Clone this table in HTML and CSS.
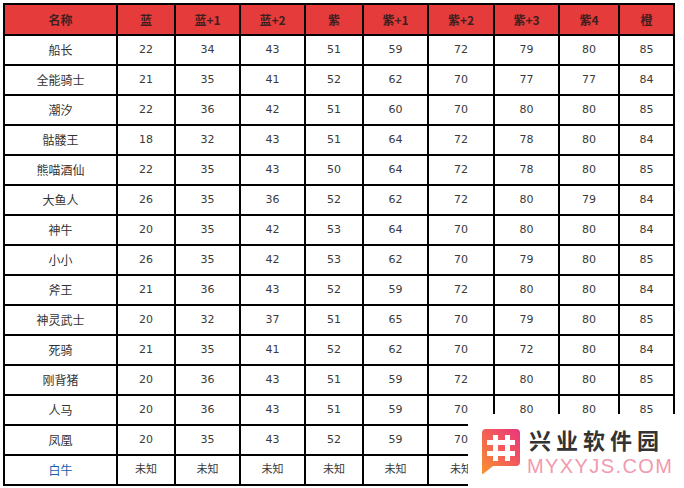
FILE: index.html
```html
<!DOCTYPE html>
<html lang="zh">
<head>
<meta charset="utf-8">
<title>英雄属性表</title>
<link rel="stylesheet" href="styles.css">
</head>
<body>
<div class="page">
<table class="grid">
  <thead>
    <tr>
      <th class="c-name">名称</th><th class="c1">蓝</th><th class="c2">蓝+1</th><th class="c3">蓝+2</th><th class="c4">紫</th><th class="c5">紫+1</th><th class="c6">紫+2</th><th class="c7">紫+3</th><th class="c8">紫4</th><th class="c9">橙</th>
    </tr>
  </thead>
  <tbody>
    <tr><td class="name">船长</td><td>22</td><td>34</td><td>43</td><td>51</td><td>59</td><td>72</td><td>79</td><td>80</td><td>85</td></tr>
    <tr><td class="name">全能骑士</td><td>21</td><td>35</td><td>41</td><td>52</td><td>62</td><td>70</td><td>77</td><td>77</td><td>84</td></tr>
    <tr><td class="name">潮汐</td><td>22</td><td>36</td><td>42</td><td>51</td><td>60</td><td>70</td><td>80</td><td>80</td><td>85</td></tr>
    <tr><td class="name">骷髅王</td><td>18</td><td>32</td><td>43</td><td>51</td><td>64</td><td>72</td><td>78</td><td>80</td><td>84</td></tr>
    <tr><td class="name">熊喵酒仙</td><td>22</td><td>35</td><td>43</td><td>50</td><td>64</td><td>72</td><td>78</td><td>80</td><td>85</td></tr>
    <tr><td class="name">大鱼人</td><td>26</td><td>35</td><td>36</td><td>52</td><td>62</td><td>72</td><td>80</td><td>79</td><td>84</td></tr>
    <tr><td class="name">神牛</td><td>20</td><td>35</td><td>42</td><td>53</td><td>64</td><td>70</td><td>80</td><td>80</td><td>84</td></tr>
    <tr><td class="name">小小</td><td>26</td><td>35</td><td>42</td><td>53</td><td>62</td><td>70</td><td>79</td><td>80</td><td>85</td></tr>
    <tr><td class="name">斧王</td><td>21</td><td>36</td><td>43</td><td>52</td><td>59</td><td>72</td><td>80</td><td>80</td><td>84</td></tr>
    <tr><td class="name">神灵武士</td><td>20</td><td>32</td><td>37</td><td>51</td><td>65</td><td>70</td><td>79</td><td>80</td><td>85</td></tr>
    <tr><td class="name">死骑</td><td>21</td><td>35</td><td>41</td><td>52</td><td>62</td><td>70</td><td>72</td><td>80</td><td>84</td></tr>
    <tr><td class="name">刚背猪</td><td>20</td><td>36</td><td>43</td><td>51</td><td>59</td><td>72</td><td>80</td><td>80</td><td>85</td></tr>
    <tr><td class="name">人马</td><td>20</td><td>36</td><td>43</td><td>51</td><td>59</td><td>70</td><td>80</td><td>80</td><td>85</td></tr>
    <tr><td class="name">凤凰</td><td>20</td><td>35</td><td>43</td><td>52</td><td>59</td><td>70</td><td></td><td></td><td></td></tr>
    <tr><td class="name link">白牛</td><td>未知</td><td>未知</td><td>未知</td><td>未知</td><td>未知</td><td>未知</td><td></td><td></td><td></td></tr>
  </tbody>
</table>

<div class="watermark">
  <svg class="wm-logo" width="40" height="46" viewBox="0 0 40 46">
    <defs>
      <linearGradient id="wmg" x1="0" y1="1" x2="1" y2="0">
        <stop offset="0" stop-color="#f7922e"/>
        <stop offset="0.55" stop-color="#f25a5a"/>
        <stop offset="1" stop-color="#e8357e"/>
      </linearGradient>
    </defs>
    <path d="M4 0 H34 Q38 0 38 4 V33 Q38 37 34 37 H11 L1 45 Q0 45.5 0 44 V4 Q0 0 4 0 Z" fill="url(#wmg)"/>
    <rect x="11" y="6" width="5" height="26" fill="#fff"/>
    <rect x="23" y="6" width="5" height="26" fill="#fff"/>
    <rect x="5" y="11" width="28" height="5" fill="#fff"/>
    <rect x="5" y="22" width="28" height="5" fill="#fff"/>
  </svg>
  <div class="wm-text">
    <div class="wm-cn">兴业软件园</div>
    <div class="wm-en">MYXYJS.COM</div>
  </div>
</div>
</div>
</body>
</html>
```

FILE: styles.css
```css
html, body {
  margin: 0;
  padding: 0;
  background: #ffffff;
}

.page {
  position: relative;
  width: 684px;
  height: 488px;
  padding: 3px 0 0 3px;
  box-sizing: border-box;
  overflow: hidden;
}

.grid {
  border-collapse: separate;
  border-spacing: 0;
  border-right: 2px solid #000;
  border-bottom: 2px solid #000;
  font-family: "Noto Sans CJK SC", "Liberation Sans", sans-serif;
  font-size: 12px;
  color: #333;
}

.grid th,
.grid td {
  box-sizing: border-box;
  border-left: 2px solid #000;
  border-top: 2px solid #000;
  padding: 0;
  text-align: center;
  vertical-align: middle;
  height: 30px;
  line-height: 16px;
}

.grid td {
  font-family: "DejaVu Sans", "Noto Sans CJK SC", sans-serif;
  font-size: 11px;
  color: #3a3a3a;
}

.grid td.name {
  font-family: "Noto Sans CJK SC", sans-serif;
  font-size: 12px;
  color: #333;
}

.grid td.link {
  color: #2060a8;
}

.grid th {
  height: 31px;
  background: #e63b3b;
  color: #3f1f1f;
  font-weight: bold;
  font-size: 12px;
}

.c-name { width: 113px; }
.c1 { width: 58px; }
.c2 { width: 65px; }
.c3 { width: 65px; }
.c4 { width: 58px; }
.c5 { width: 65px; }
.c6 { width: 66px; }
.c7 { width: 65px; }
.c8 { width: 60px; }
.c9 { width: 55px; }

.watermark {
  position: absolute;
  left: 468px;
  top: 414px;
  width: 216px;
  height: 74px;
  background: #ffffff;
  display: flex;
  align-items: flex-start;
  padding: 9px 0 0 14px;
  box-sizing: border-box;
  gap: 5px;
}

.wm-logo {
  flex: none;
  display: block;
  margin-top: 6px;
}

.wm-text {
  display: flex;
  flex-direction: column;
}

.wm-cn {
  font-family: "Noto Sans CJK SC", sans-serif;
  font-weight: bold;
  font-size: 22px;
  line-height: 32px;
  letter-spacing: 5px;
  color: #333333;
  margin-left: 2px;
}

.wm-en {
  font-family: "Liberation Sans", sans-serif;
  font-size: 20px;
  line-height: 23px;
  letter-spacing: 1.4px;
  color: #f29aae;
}
```
